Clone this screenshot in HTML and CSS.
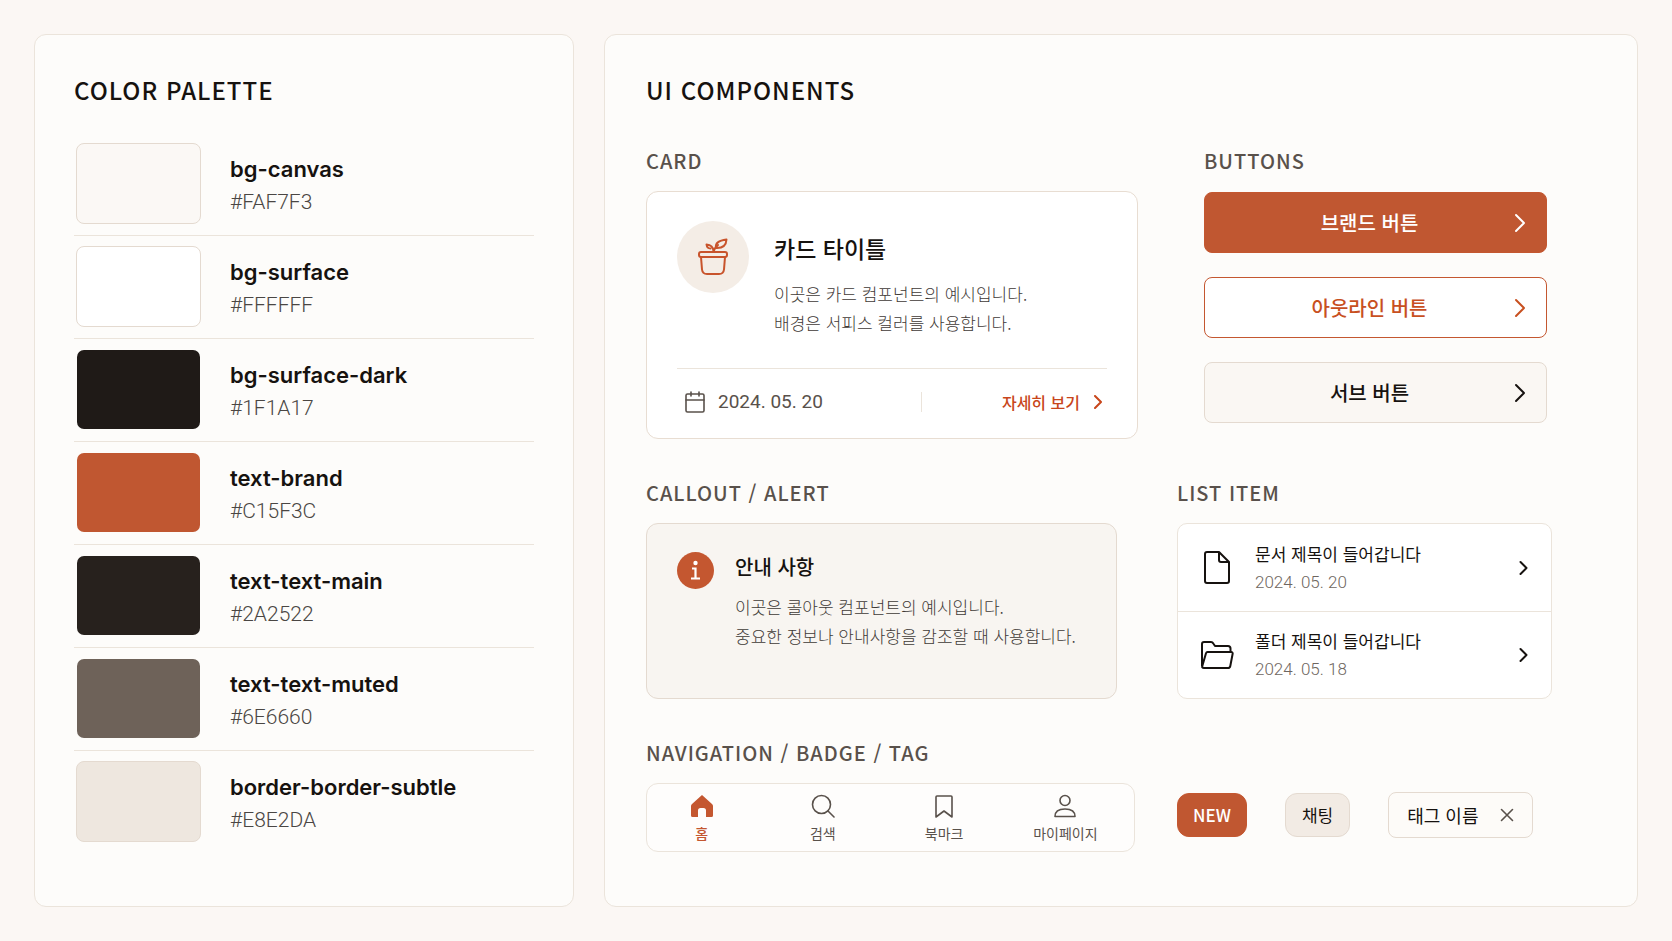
FILE: index.html
```html
<!DOCTYPE html>
<html lang="ko">
<head>
    <meta charset="UTF-8">
    <meta name="viewport" content="width=device-width, initial-scale=1.0">
    <title>Design System</title>
    <link rel="stylesheet" href="styles.css">
</head>
<body>
    <section class="panel palette">
        <h2>COLOR PALETTE</h2>
        <ul class="swatches">
            <li>
                <span class="swatch canvas"></span>
                <div class="info"><strong>bg-canvas</strong><span>#FAF7F3</span></div>
            </li>
            <li>
                <span class="swatch surface"></span>
                <div class="info"><strong>bg-surface</strong><span>#FFFFFF</span></div>
            </li>
            <li>
                <span class="swatch surface-dark"></span>
                <div class="info"><strong>bg-surface-dark</strong><span>#1F1A17</span></div>
            </li>
            <li>
                <span class="swatch brand"></span>
                <div class="info"><strong>text-brand</strong><span>#C15F3C</span></div>
            </li>
            <li>
                <span class="swatch text-main"></span>
                <div class="info"><strong>text-text-main</strong><span>#2A2522</span></div>
            </li>
            <li>
                <span class="swatch text-muted"></span>
                <div class="info"><strong>text-text-muted</strong><span>#6E6660</span></div>
            </li>
            <li>
                <span class="swatch border-subtle"></span>
                <div class="info"><strong>border-border-subtle</strong><span>#E8E2DA</span></div>
            </li>
        </ul>
    </section>

    <main class="panel components">
        <h2>UI COMPONENTS</h2>

        <div class="row row-card">
            <section>
                <h3>CARD</h3>
                <article class="card">
                    <div class="card-body">
                        <span class="card-icon">
                            <svg width="32" height="38" viewBox="0 0 32 38" fill="none" stroke="currentColor" stroke-width="2" stroke-linejoin="round" stroke-linecap="round">
                                <rect x="2" y="14" width="28" height="5" rx="2"/>
                                <path d="M4 19l1 12.500Q5.500 36 10 36h12q4.500 0 5-4.500L28 19"/>
                                <path d="M16.500 14Q17 10.500 21 7"/>
                                <path d="M19 10Q17.500 3 29.500 1.500Q29 10.500 19 10z"/>
                                <path d="M16.500 13Q16 7 9.500 6.500Q10 10.500 13.500 10.500"/>
                            </svg>
                        </span>
                        <div class="card-text">
                            <h4>카드 타이틀</h4>
                            <p>이곳은 카드 컴포넌트의 예시입니다.<br>배경은 서피스 컬러를 사용합니다.</p>
                        </div>
                    </div>
                    <div class="card-footer">
                        <span class="date">
                            <svg width="20" height="22" viewBox="0 0 20 22" fill="none" stroke="currentColor" stroke-width="1.600" stroke-linecap="round">
                                <rect x="1" y="3" width="18" height="18" rx="1.500"/>
                                <path d="M1 9h18M6 1v4M14 1v4"/>
                            </svg>
                            2024. 05. 20
                        </span>
                        <a class="more" href="#">
                            자세히 보기
                            <svg width="8" height="14" viewBox="0 0 8 14" fill="none" stroke="currentColor" stroke-width="2" stroke-linecap="round" stroke-linejoin="round"><path d="M1 1l6 6-6 6"/></svg>
                        </a>
                    </div>
                </article>
            </section>
            <section>
                <h3>BUTTONS</h3>
                <div class="buttons">
                    <button class="btn btn-brand"><span>브랜드 버튼</span><svg width="12" height="20" viewBox="0 0 12 20" fill="none" stroke="currentColor" stroke-width="2" stroke-linecap="round" stroke-linejoin="round"><path d="M2 2l8 8-8 8"/></svg></button>
                    <button class="btn btn-outline"><span>아웃라인 버튼</span><svg width="12" height="20" viewBox="0 0 12 20" fill="none" stroke="currentColor" stroke-width="2" stroke-linecap="round" stroke-linejoin="round"><path d="M2 2l8 8-8 8"/></svg></button>
                    <button class="btn btn-sub"><span>서브 버튼</span><svg width="12" height="20" viewBox="0 0 12 20" fill="none" stroke="currentColor" stroke-width="2" stroke-linecap="round" stroke-linejoin="round"><path d="M2 2l8 8-8 8"/></svg></button>
                </div>
            </section>
        </div>

        <div class="row row-callout">
            <section>
                <h3>CALLOUT / ALERT</h3>
                <div class="callout" role="note">
                    <svg class="callout-icon" width="37" height="37" viewBox="0 0 37 37">
                        <circle cx="18.500" cy="18.500" r="18.500" fill="#c45730"/>
                        <circle cx="18.500" cy="11" r="2.200" fill="#fff"/>
                        <path d="M15 16.500h3.500v9.500M14 26.500h9" fill="none" stroke="#fff" stroke-width="2.200"/>
                    </svg>
                    <div>
                        <h4>안내 사항</h4>
                        <p>이곳은 콜아웃 컴포넌트의 예시입니다.<br>중요한 정보나 안내사항을 감조할 때 사용합니다.</p>
                    </div>
                </div>
            </section>
            <section>
                <h3>LIST ITEM</h3>
                <ul class="list">
                    <li>
                        <svg width="34" height="34" viewBox="0 0 34 34" fill="none" stroke="currentColor" stroke-width="2" stroke-linejoin="round">
                            <path d="M6 1h12l10 10v19q0 2-2 2H6q-2 0-2-2V3q0-2 2-2z"/>
                            <path d="M18 1v8q0 2 2 2h8"/>
                        </svg>
                        <div class="item-text"><strong>문서 제목이 들어갑니다</strong><span>2024. 05. 20</span></div>
                        <svg width="9" height="16" viewBox="0 0 9 16" fill="none" stroke="currentColor" stroke-width="2" stroke-linecap="round" stroke-linejoin="round"><path d="M1.500 2l6 6-6 6"/></svg>
                    </li>
                    <li>
                        <svg width="34" height="34" viewBox="0 0 34 34" fill="none" stroke="currentColor" stroke-width="2" stroke-linejoin="round">
                            <path d="M1 28V6q0-2 2-2h7q1.500 0 2.300 1.500L14 8h13q2.500 0 2.500 2.500V14"/>
                            <path d="M6.500 14H30q2 0 1.600 2l-2.300 12q-.4 2-2.300 2H3q-2.500 0-1.600-2.400L5 15.200Q5.400 14 6.500 14z"/>
                        </svg>
                        <div class="item-text"><strong>폴더 제목이 들어갑니다</strong><span>2024. 05. 18</span></div>
                        <svg width="9" height="16" viewBox="0 0 9 16" fill="none" stroke="currentColor" stroke-width="2" stroke-linecap="round" stroke-linejoin="round"><path d="M1.500 2l6 6-6 6"/></svg>
                    </li>
                </ul>
            </section>
        </div>

        <section>
            <h3>NAVIGATION / BADGE / TAG</h3>
            <div class="row row-nav">
                <nav class="tabs">
                    <a class="active" href="#">
                        <svg width="24" height="24" viewBox="0 0 24 24" fill="currentColor"><path d="M12 1L22 10q1 .8 1 2v9.500q0 1.500-1.500 1.500H16v-6.500q0-2.500-2.500-2.500h-3q-2.500 0-2.500 2.500V23H2.500Q1 23 1 21.500V12q0-1.200 1-2z"/></svg>
                        홈
                    </a>
                    <a href="#">
                        <svg width="24" height="24" viewBox="0 0 24 24" fill="none" stroke="currentColor" stroke-width="1.600" stroke-linecap="round"><circle cx="10.500" cy="10.500" r="9"/><path d="M17 17l6 6"/></svg>
                        검색
                    </a>
                    <a href="#">
                        <svg width="24" height="24" viewBox="0 0 24 24" fill="none" stroke="currentColor" stroke-width="1.600" stroke-linejoin="round"><path d="M4 3q0-1 1-1h14q1 0 1 1v20l-8-6-8 6z"/></svg>
                        북마크
                    </a>
                    <a href="#">
                        <svg width="24" height="24" viewBox="0 0 24 24" fill="none" stroke="currentColor" stroke-width="1.600" stroke-linejoin="round"><circle cx="12" cy="6.500" r="5"/><path d="M2 22.500Q2 15 12 15t10 7.500z"/></svg>
                        마이페이지
                    </a>
                </nav>
                <div class="badges">
                    <span class="badge badge-new">NEW</span>
                    <span class="badge badge-chat">채팅</span>
                    <span class="tag">
                        태그 이름
                        <button aria-label="삭제"><svg width="14" height="14" viewBox="0 0 14 14" fill="none" stroke="currentColor" stroke-width="1.600" stroke-linecap="round"><path d="M1.500 1.500l11 11M12.500 1.500l-11 11"/></svg></button>
                    </span>
                </div>
            </div>
        </section>
    </main>
</body>
</html>
```
FILE: styles.css
```css
* {
    box-sizing: border-box;
    margin: 0;
    padding: 0;
}
body {
    display: grid;
    grid-template-columns: 540fr 1034fr;
    gap: 30px;
    min-height: 100vh;
    padding: 34px;
    background-color: #fbf7f4;
    color: #16120f;
    font-family: "Noto Sans CJK KR", sans-serif;
}
ul { list-style: none; }
a { text-decoration: none; }
button {
    font-family: inherit;
    cursor: pointer;
}
svg { flex-shrink: 0; }

.panel {
    border: 1px solid #ebe4db;
    border-radius: 12px;
    background-color: #fdfcfa;
}
.palette { padding: 38px 39px; }
.components { padding: 38px 85px 38px 41px; }
h2 {
    font-size: 24px;
    font-weight: 500;
    line-height: 34px;
    letter-spacing: 1px;
}
h3 {
    margin-bottom: 18px;
    color: #59514b;
    font-size: 20px;
    font-weight: 500;
    line-height: 24px;
    letter-spacing: 1px;
}
h4 {
    font-size: 20px;
    font-weight: 500;
    line-height: 30px;
}
p {
    color: #3f3a37;
    font-size: 17px;
    font-weight: 300;
    line-height: 29px;
}

/* palette */
.swatches { margin-top: 26px; }
.swatches li {
    display: flex;
    align-items: center;
    gap: 29px;
    padding: 10px 2px 11px;
    border-bottom: 1px solid #ebe4db;
}
.swatches li:last-child { border-bottom: none; }
.swatch {
    width: 125px;
    height: 81px;
    border: 1px solid #e4dad0;
    border-radius: 8px;
}
.canvas { background-color: #fbf8f5; }
.surface { background-color: #fff; }
.surface-dark { background-color: #1f1a17; }
.brand { background-color: #c05731; }
.text-main { background-color: #27211d; }
.text-muted { background-color: #6e6259; }
.border-subtle { background-color: #eee7df; }
.surface-dark, .brand, .text-main, .text-muted { border-color: transparent; background-clip: padding-box; }
.info {
    display: flex;
    flex-direction: column;
    gap: 1px;
    padding-top: 4px;
    line-height: 32px;
}
.info strong {
    font-family: Inter, sans-serif;
    font-size: 22px;
    font-weight: 600;
}
.info span {
    color: #4a4643;
    font-family: Roboto, sans-serif;
    font-size: 21px;
    font-weight: 300;
}

/* components */
.components {
    display: flex;
    flex-direction: column;
    gap: 42px;
}
.row { display: grid; }
.row-card {
    grid-template-columns: 492fr 343fr;
    gap: 66px;
    padding-right: 5px;
}
.row-callout {
    grid-template-columns: 471fr 375fr;
    gap: 60px;
}
.row-nav {
    grid-template-columns: 489fr 375fr;
    gap: 42px;
}

.card {
    padding: 29px 30px 0;
    border: 1px solid #e8ddd2;
    border-radius: 12px;
    background-color: #fff;
}
.card-body {
    display: flex;
    gap: 25px;
}
.card-icon {
    display: flex;
    flex-shrink: 0;
    align-items: center;
    justify-content: center;
    width: 72px;
    height: 72px;
    border-radius: 50%;
    background-color: #f4ede6;
    color: #c8542c;
}
.card-text { padding-top: 12px; }
.card-text h4 { font-size: 23px; }
.card-text p { margin-top: 16px; }
.card-footer {
    display: grid;
    grid-template-columns: 243fr 186fr;
    align-items: center;
    margin-top: 31px;
    padding: 19px 0 22px;
    border-top: 1px solid #ebe4db;
}
.date {
    display: flex;
    align-items: center;
    gap: 13px;
    padding-left: 8px;
    color: #59514b;
    font: 400 19px/28px Roboto, sans-serif;
}
.more {
    display: flex;
    align-items: center;
    justify-content: flex-end;
    gap: 14px;
    padding-right: 5px;
    border-left: 1px solid #ebe4db;
    color: #c8461b;
    font-size: 16px;
    font-weight: 500;
    line-height: 20px;
}

.buttons {
    display: flex;
    flex-direction: column;
    gap: 24px;
    padding-top: 1px;
}
.btn {
    display: flex;
    align-items: center;
    height: 61px;
    padding: 0 20px;
    border: 1px solid #c45730;
    border-radius: 8px;
    font-size: 20px;
    font-weight: 500;
}
.btn span { flex: 1; }
.btn-brand {
    background-color: #c05731;
    color: #fff;
}
.btn-outline {
    background-color: #fff;
    color: #c8501f;
}
.btn-sub {
    border-color: #e4dad0;
    background-color: #faf7f3;
    color: #16120f;
}

.callout {
    display: flex;
    gap: 21px;
    min-height: 176px;
    padding: 28px 30px;
    border: 1px solid #e4dad0;
    border-radius: 12px;
    background-color: #f8f5f1;
}
.callout p { margin-top: 10px; }

.list {
    border: 1px solid #ebe4db;
    border-radius: 10px;
    background-color: #fff;
}
.list li {
    display: flex;
    align-items: center;
    gap: 20px;
    height: 87px;
    padding: 0 23px;
}
.list li + li { border-top: 1px solid #ebe4db; }
.item-text {
    display: flex;
    flex: 1;
    flex-direction: column;
    line-height: 28px;
}
.item-text strong {
    font-size: 17px;
    font-weight: 400;
}
.item-text span {
    color: #6e6660;
    font-family: Roboto, sans-serif;
    font-size: 17px;
    font-weight: 300;
}

.tabs {
    display: flex;
    gap: 12px;
    padding: 10px 14px 8px 0;
    border: 1px solid #ebe4db;
    border-radius: 12px;
    background-color: #fefdfc;
}
.tabs a {
    display: flex;
    flex: 1 1 0;
    flex-direction: column;
    align-items: center;
    gap: 5px;
    color: #59514b;
    font-size: 14px;
    line-height: 20px;
}
.tabs .active {
    color: #c45730;
    font-weight: 500;
}

.badges {
    display: flex;
    align-items: center;
    align-self: start;
    gap: 38px;
    padding-top: 9px;
}
.badge {
    padding: 0 16px;
    border: 1px solid #e4dad0;
    border-radius: 12px;
    font-size: 17px;
    line-height: 42px;
}
.badge-new {
    padding: 0 15px;
    border-color: #c45730;
    background-color: #c05731;
    color: #fff;
    font-weight: 500;
}
.badge-chat { background-color: #f2ebe4; }
.tag {
    display: flex;
    align-items: center;
    gap: 22px;
    padding: 0 18px;
    border: 1px solid #e4dad0;
    border-radius: 8px;
    background-color: #fdfbf8;
    font-size: 18px;
    line-height: 44px;
}
.tag button {
    display: flex;
    border: none;
    background: none;
    color: #59514b;
}
```
